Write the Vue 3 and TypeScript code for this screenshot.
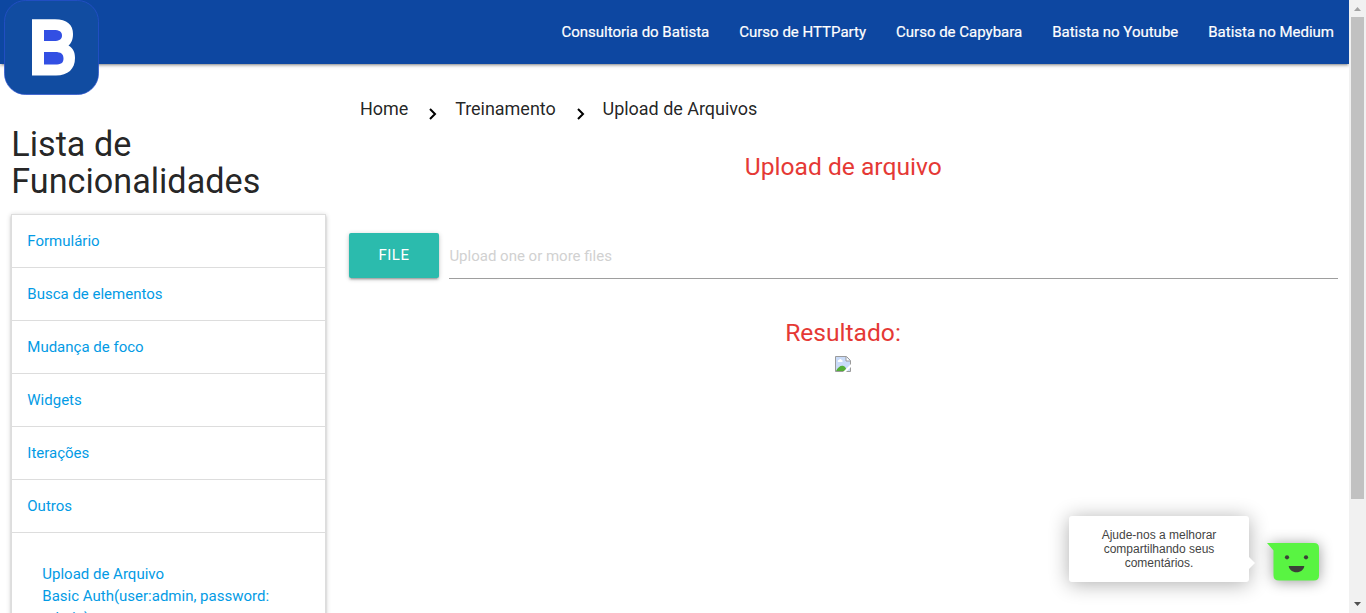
<script setup lang="ts">
const navLinks: string[] = [
  'Consultoria do Batista',
  'Curso de HTTParty',
  'Curso de Capybara',
  'Batista no Youtube',
  'Batista no Medium',
]
const features: string[] = ['Formulário', 'Busca de elementos', 'Mudança de foco', 'Widgets', 'Iterações', 'Outros']
const others: string[] = ['Upload de Arquivo', 'Basic Auth(user:admin, password: admin)']
const crumbs: string[] = ['Home', 'Treinamento', 'Upload de Arquivos']
</script>

<template>
  <div class="page">
    <div class="content">
      <nav class="navbar">
        <svg class="logo" width="96" height="96" viewBox="0 0 96 96">
          <rect x="1.500" y="0.500" width="94" height="94" rx="21" fill="#114ca1" stroke="#2a50d0" stroke-width="0.7" />
          <path fill="#fff" fill-rule="evenodd" d="M29 19.300H52C64 19.300 70 25 70 34C70 40 68 43.500 65.500 45.500C70 48 72 52 72 58C72 69 65 75.500 53 75.500H29Z" />
          <path fill="#324fe3" d="M41 30H51C56 30 59 31.500 59 35.500C59 39.500 56 41 51 41H41ZM41 52H52C58 52 60.500 54 60.500 58.500C60.500 63 58 64.500 52 64.500H41Z" />
        </svg>
        <ul class="nav-list">
          <li v-for="link in navLinks" :key="link">{{ link }}</li>
        </ul>
      </nav>

      <div class="columns">
        <aside class="sidebar">
          <h4>Lista de Funcionalidades</h4>
          <ul class="collapsible">
            <li v-for="feature in features" :key="feature" class="feature">{{ feature }}</li>
            <li class="sublist">
              <a v-for="item in others" :key="item">{{ item }}</a>
            </li>
          </ul>
        </aside>

        <main class="main">
          <div class="crumbs">
            <template v-for="(crumb, i) in crumbs" :key="crumb">
              <svg v-if="i > 0" class="chevron" width="8" height="12" viewBox="0 0 8 12">
                <path d="M1 1L6 6L1 11" fill="none" stroke="#000" stroke-width="2" />
              </svg>
              <span>{{ crumb }}</span>
            </template>
          </div>
          <h5 class="title">Upload de arquivo</h5>
          <div class="file-field">
            <button class="file-btn" type="button">FILE</button>
            <div class="file-path">Upload one or more files</div>
          </div>
          <h5 class="result">Resultado:</h5>
          <svg class="broken" width="16" height="16" viewBox="0 0 16 16">
            <path d="M0.500 0.500H11.500L15.500 4.500V15.500H0.500Z" fill="#c9dbf8" stroke="#9b9b9b" />
            <path d="M11 1V5H15" fill="#fff" stroke="#9b9b9b" />
            <path d="M3 6C2 4.500 3.500 4 4 4C4.500 2.500 6.500 3 6.500 4C8 4 8 6 7 6Z" fill="#fff" />
            <path d="M1 15C3 11 6 9 8.500 10C10 10.500 11 12 12 15Z" fill="#53ae37" />
            <path d="M16 8L8 16H11L16 11Z" fill="#fff" />
          </svg>
        </main>
      </div>
    </div>

    <div class="feedback">
      <div class="bubble">Ajude-nos a melhorar compartilhando seus comentários.</div>
      <svg class="face" width="53" height="38" viewBox="0 0 53 38">
        <path d="M0 0H47Q52 0 52 5V32.500Q52 37.500 47 37.500H12Q6.500 37.500 6.500 32.500V7.500Z" fill="#59f442" />
        <circle cx="20" cy="14.300" r="2.100" fill="#3b4038" />
        <circle cx="39" cy="14.300" r="2.100" fill="#3b4038" />
        <path d="M21.700 23H37.300C37 26.500 33.500 29.300 29.500 29.300S22 26.500 21.700 23Z" fill="#3b4038" />
      </svg>
    </div>

    <div class="scrollbar">
      <svg width="17" height="17" viewBox="0 0 17 17"><path d="M5 11L8.500 7L12 11Z" fill="#a3a3a3" /></svg>
      <div class="thumb"></div>
      <svg class="down" width="17" height="17" viewBox="0 0 17 17"><path d="M5 6L8.500 10L12 6Z" fill="#505050" /></svg>
    </div>
  </div>
</template>

<style>
body {
  margin: 0;
  overflow: hidden;
}
</style>

<style scoped>
.page {
  display: flex;
  height: 613px;
  overflow: hidden;
  position: relative;
  background: #fff;
  font-family: Roboto, 'Liberation Sans', sans-serif;
  font-size: 15px;
  line-height: 22px;
  color: rgba(0, 0, 0, 0.87);
}
ul {
  list-style: none;
  margin: 0;
  padding: 0;
}
.content {
  width: 1349px;
  height: 613px;
  overflow: hidden;
}
.navbar {
  position: relative;
  height: 64px;
  background: #0d47a1;
  box-shadow: 0 2px 2px 0 rgba(0, 0, 0, 0.14), 0 3px 1px -2px rgba(0, 0, 0, 0.12), 0 1px 5px 0 rgba(0, 0, 0, 0.2);
}
.logo {
  position: absolute;
  left: 3px;
  top: 0;
}
.nav-list {
  display: flex;
  justify-content: flex-end;
  gap: 30px;
  padding-right: 15px;
  line-height: 64px;
  color: #fff;
  -webkit-text-stroke: 0.2px #fff;
}
.columns {
  display: flex;
}
.sidebar {
  width: 315px;
  padding: 62px 0 0 11px;
}
h4 {
  margin: 0 0 14px;
  padding-left: 0.3px;
  font-size: 34.2px;
  line-height: 37px;
  font-weight: 400;
}
.collapsible {
  border: 1px solid #ddd;
  border-bottom: 0;
  color: #039be5;
  box-shadow: 0 2px 2px 0 rgba(0, 0, 0, 0.14), 0 3px 1px -2px rgba(0, 0, 0, 0.12), 0 1px 5px 0 rgba(0, 0, 0, 0.2);
}
.feature {
  padding: 15px 15px 15px 15.3px;
  border-bottom: 1px solid #ddd;
}
.sublist {
  padding: 30px 30px 30px 30.3px;
}
.sublist a {
  display: block;
}
.main {
  width: 989px;
  padding: 33px 0 0 23px;
}
.crumbs {
  display: flex;
  height: 24px;
  padding-left: 11px;
  font-size: 18px;
  line-height: 24px;
  letter-spacing: -0.03px;
}
.chevron {
  margin: 11px 18px 0 20.8px;
}
h5 {
  margin: 0;
  font-size: 24.6px;
  line-height: 27px;
  font-weight: 400;
  color: #e53935;
  text-align: center;
}
.title {
  margin-top: 32px;
  padding-right: 0.4px;
}
.file-field {
  display: flex;
  gap: 10px;
  margin-top: 53px;
}
.file-btn {
  width: 90px;
  height: 45px;
  padding: 0;
  border: 0;
  border-radius: 2px;
  background: #2bbbad;
  color: #fff;
  font: 400 15px/45px Roboto, sans-serif;
  letter-spacing: 0.5px;
  box-shadow: 0 2px 2px 0 rgba(0, 0, 0, 0.14), 0 3px 1px -2px rgba(0, 0, 0, 0.12), 0 1px 5px 0 rgba(0, 0, 0, 0.2);
}
.file-path {
  flex: 1;
  height: 45px;
  padding-left: 0.4px;
  border-bottom: 1px solid #9e9e9e;
  line-height: 47px;
  color: #d1d1d1;
}
.result {
  margin-top: 40px;
  padding-right: 1px;
}
.broken {
  display: block;
  margin: 10px 0 0 486px;
}
.feedback {
  position: absolute;
  left: 1069px;
  top: 516px;
  display: flex;
}
.bubble {
  position: relative;
  box-sizing: border-box;
  width: 180px;
  height: 66px;
  padding: 12px 24px;
  border-radius: 3px;
  background: #fff;
  box-shadow: 0 2px 20px rgba(0, 0, 0, 0.32);
  color: #444;
  font: 12px/14px 'Liberation Sans', Arial, sans-serif;
  text-align: center;
}
.bubble::after {
  content: '';
  position: absolute;
  left: 180px;
  top: 41px;
  border: 6px solid transparent;
  border-right-width: 0;
  border-left-color: #fff;
}
.face {
  margin: 27px 0 0 18px;
  overflow: visible;
  filter: drop-shadow(0 1px 7px rgba(0, 0, 0, 0.4));
}
.scrollbar {
  display: flex;
  flex-direction: column;
  align-items: center;
  width: 17px;
  background: #f1f1f1;
}
.thumb {
  width: 13px;
  height: 482px;
  background: #c1c1c1;
}
.down {
  margin-top: auto;
}
</style>
